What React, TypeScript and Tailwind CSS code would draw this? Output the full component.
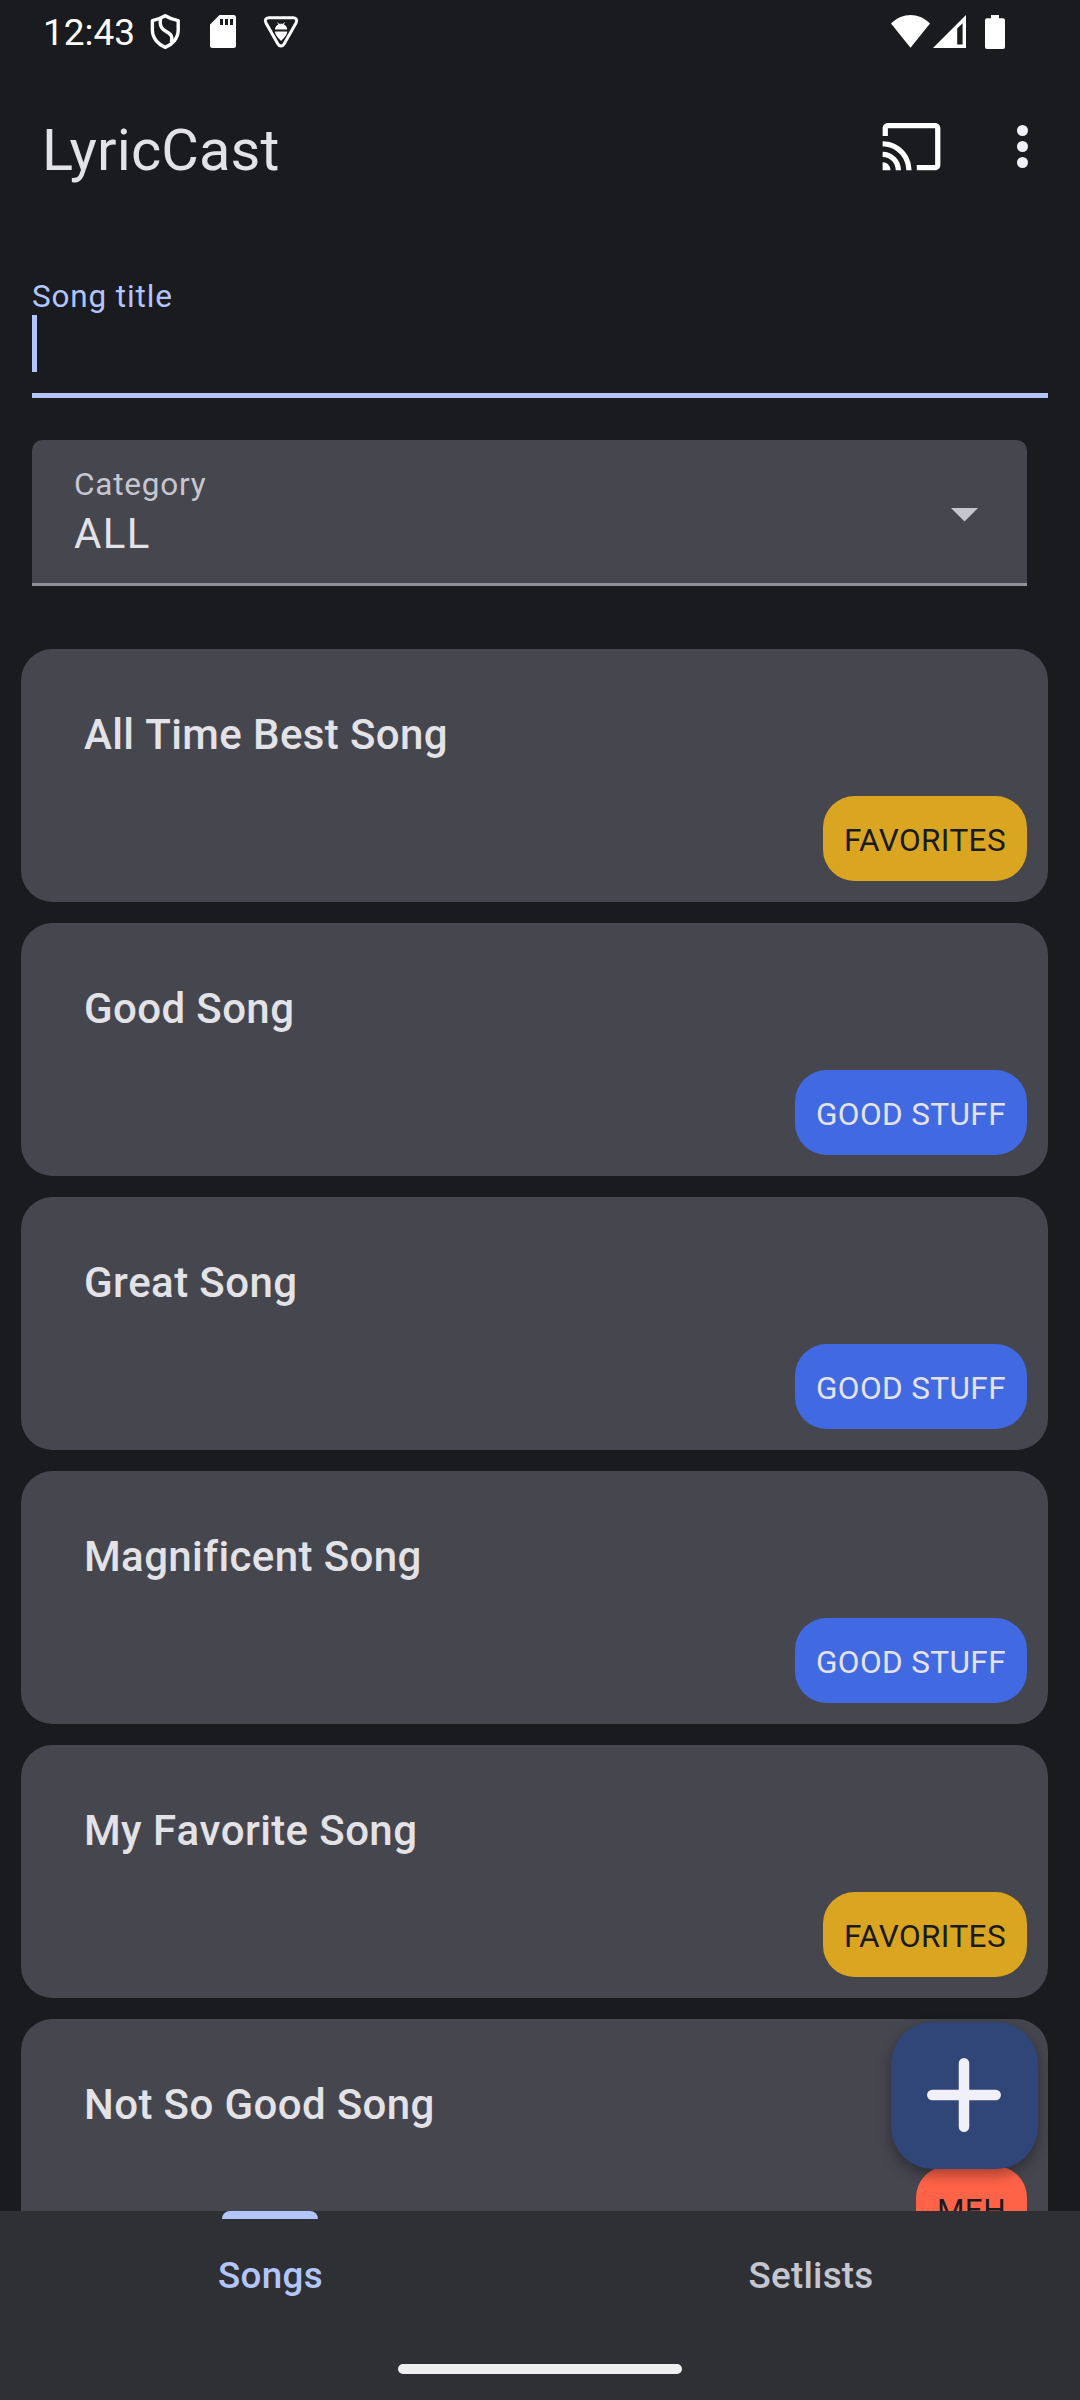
import React from "react";

type Tone = "gold" | "blue" | "red";

const songs: { title: string; category: string; tone: Tone }[] = [
  { title: "All Time Best Song", category: "FAVORITES", tone: "gold" },
  { title: "Good Song", category: "GOOD STUFF", tone: "blue" },
  { title: "Great Song", category: "GOOD STUFF", tone: "blue" },
  { title: "Magnificent Song", category: "GOOD STUFF", tone: "blue" },
  { title: "My Favorite Song", category: "FAVORITES", tone: "gold" },
  { title: "Not So Good Song", category: "MEH", tone: "red" },
];

const tones: Record<Tone, string> = {
  gold: "bg-[#daa520] text-[#1b1b1f]",
  blue: "bg-[#4169e1] text-[#e3e2e6]",
  red: "bg-[#ff6347] text-[#1b1b1f]",
};

function ShieldIcon() {
  return (
    <svg className="ml-[15px] h-[37px] w-[31px]" viewBox="150 13 31 37" fill="none" stroke="#fff" strokeWidth="3.4" strokeLinejoin="round">
      <path d="M165.3 15.7C169 18 173.500 19.800 178.2 20.6V30C178.2 38 172.5 44.500 165.3 47.3C158 44.500 152.4 38 152.4 30V20.6C157 19.800 161.500 18 165.3 15.7Z" />
      <path d="M160.700 17.600C159.500 23 160 26.500 163 29.200C165.500 31.500 168.500 32.500 170.800 35C172.300 37 172.200 39 171.300 42.500" />
    </svg>
  );
}

function SdCardIcon() {
  return (
    <svg className="ml-[29px] h-[33px] w-[26px]" viewBox="0 0 26 33" fill="#fff">
      <path fillRule="evenodd" d="M9.5 0H23.500a2.500 2.500 0 0 1 2.500 2.500v28a2.500 2.500 0 0 1-2.500 2.500H2.500a2.500 2.500 0 0 1-2.500-2.500V9.5ZM10 4v6h3V4Zm5 0v6h3V4Zm5 0v6h3V4Z" />
    </svg>
  );
}

function DebugIcon() {
  return (
    <svg className="ml-[27px] h-[34px] w-[36px]" viewBox="263 15 36 34">
      <path d="M268.700 17.800H293.300C296.500 17.800 297.500 20.500 296 23L284.100 44C282.700 46.600 279.300 46.600 277.900 44L266 23C264.500 20.500 265.500 17.800 268.700 17.800Z" fill="none" stroke="#fff" strokeWidth="3" />
      <path d="M275 29.600C275 26.500 276.800 25 278.400 24.400L276.600 21.700L279 23.700H283L285.400 21.700L283.800 24.400C285.600 25 287.200 26.500 287.200 29.600ZM275 31.400H287.200C287.200 35 284 37.500 281.100 41C278.200 37.500 275 35 275 31.400Z" fill="#fff" />
    </svg>
  );
}

function StatusBar() {
  return (
    <div className="flex h-[63px] items-center pl-[43px] pr-[75px] text-[37px] leading-none text-white">
      <span className="w-[92px] whitespace-nowrap pt-[2px]">12:43</span>
      <ShieldIcon />
      <SdCardIcon />
      <DebugIcon />
      <div className="ml-auto flex h-[34px] items-start">
        <svg className="h-[33px] w-[39px]" viewBox="0 0 39 33" fill="#fff">
          <path d="M0 8.5C12-2.8 27-2.8 39 8.5L19.5 32.8Z" />
        </svg>
        <svg className="ml-[3px] h-[33px] w-[33px]" viewBox="0 0 33 33" fill="#fff">
          <path fillRule="evenodd" d="M33 0V33H0ZM29.6 8.2L24.2 13.6V29.6H29.6Z" />
        </svg>
        <svg className="ml-[19px] h-[34px] w-5" viewBox="0 0 20 34" fill="#fff">
          <path d="M6 0h8v3.300h4a2 2 0 0 1 2 2V32a2 2 0 0 1-2 2H2a2 2 0 0 1-2-2V5.300a2 2 0 0 1 2-2h4Z" />
        </svg>
      </div>
    </div>
  );
}

function Toolbar() {
  return (
    <header className="flex h-[174px] items-center pl-[42px] pr-[52px]">
      <h1 className="flex-1 pt-[2px] text-[57.75px] leading-none tracking-[0.15px] text-[#e3e2e6]">LyricCast</h1>
      <button className="mb-[7px] mr-[74px]" aria-label="Cast">
        <svg className="h-[63px] w-[63px]" viewBox="0 0 24 24" fill="#fff">
          <path d="M21 3H3c-1.100 0-2 .9-2 2v3h2V5h18v14h-7v2h7c1.100 0 2-.9 2-2V5c0-1.100-.9-2-2-2zM1 18v3h3c0-1.660-1.340-3-3-3zm0-4v2c2.760 0 5 2.240 5 5h2c0-3.870-3.130-7-7-7zm0-4v2c4.970 0 9 4.030 9 9h2c0-6.080-4.930-11-11-11z" />
        </svg>
      </button>
      <button className="mb-[7px] flex flex-col gap-[5px]" aria-label="More options">
        <span className="size-[11px] rounded-full bg-[#f1eff7]" />
        <span className="size-[11px] rounded-full bg-[#f1eff7]" />
        <span className="size-[11px] rounded-full bg-[#f1eff7]" />
      </button>
    </header>
  );
}

function SongCard({ title, category, tone }: { title: string; category: string; tone: Tone }) {
  return (
    <article className="flex h-[253px] shrink-0 flex-col justify-between rounded-[31.5px] bg-[#46464f] pb-[21px] pl-[63px] pr-[21px] pt-[61px]">
      <h2 className="text-[42px] font-medium leading-[50px] tracking-[0.39px] text-[#e3e2e6] [font-kerning:none]">{title}</h2>
      <span className={`flex h-[85px] items-center self-end rounded-[31.5px] px-[21px] pt-[4px] text-[31.5px] leading-none tracking-[0.4px] ${tones[tone]}`}>
        {category}
      </span>
    </article>
  );
}

export default function App() {
  return (
    <div className="flex h-[2400px] w-[1080px] flex-col overflow-hidden bg-[#1a1b1f] font-[Roboto,sans-serif]">
      <StatusBar />
      <Toolbar />
      <section className="flex flex-col pl-8 pr-8">
        <div className="flex h-[161px] flex-col border-b-[5px] border-[#b2c5ff] pt-[41px]">
          <label className="h-[37px] text-[31.5px] leading-[37px] tracking-[0.85px] text-[#b2c5ff]">Song title</label>
          <span className="h-[57px] w-[5px] bg-[#b2c5ff]" />
        </div>
        <div className="mr-[21px] mt-[42px] flex h-[146px] items-center justify-between rounded-t-[10.5px] border-b-[3px] border-[#8f909a] bg-[#46464f] pl-[42px] pr-[49px]">
          <div className="flex flex-col pt-[1px]">
            <span className="text-[31.5px] leading-[37px] tracking-[0.8px] text-[#c6c6d0]">Category</span>
            <span className="mt-1.5 text-[42px] leading-[50px] tracking-[1.31px] text-[#e3e2e6]">ALL</span>
          </div>
          <svg className="mt-[7px] h-[14px] w-[27px]" viewBox="0 0 27 14" fill="#c6c6d0">
            <path d="M0 0H27L13.500 13.500Z" />
          </svg>
        </div>
      </section>
      <main className="relative mt-[63px] h-[1562px] shrink-0 overflow-hidden pl-[21px] pr-8">
        <div className="flex flex-col gap-[21px]">
          {songs.map((song) => (
            <SongCard key={song.title} {...song} />
          ))}
        </div>
        <button
          className="absolute bottom-[42px] right-[42px] flex size-[147px] items-center justify-center rounded-[42px] bg-[#304578] shadow-[0_6px_14px_rgba(0,0,0,0.35)]"
          aria-label="Add song"
        >
          <svg className="mb-px mr-px size-[74px]" viewBox="0 0 74 74" fill="none" stroke="#f1eff7" strokeWidth="10.5" strokeLinecap="round">
            <path d="M37 5.300V68.700M5.300 37H68.700" />
          </svg>
        </button>
      </main>
      <footer className="flex flex-1 flex-col items-center justify-between bg-[#2f3033] pb-[26px]">
        <nav className="flex w-full text-[36.75px] font-medium">
          <div className="flex flex-1 flex-col items-center text-[#b2c5ff]">
            <span className="h-2 w-24 rounded-t-lg bg-[#b2c5ff]" />
            <span className="mt-[35px] pl-px leading-[44px] tracking-[0.36px]">Songs</span>
          </div>
          <div className="flex flex-1 flex-col items-center pt-2 text-[#c6c6d0]">
            <span className="mt-[35px] pl-[2px] leading-[44px] tracking-[0.26px]">Setlists</span>
          </div>
        </nav>
        <div className="h-[10px] w-[284px] rounded-full bg-[#efefef]" />
      </footer>
    </div>
  );
}
